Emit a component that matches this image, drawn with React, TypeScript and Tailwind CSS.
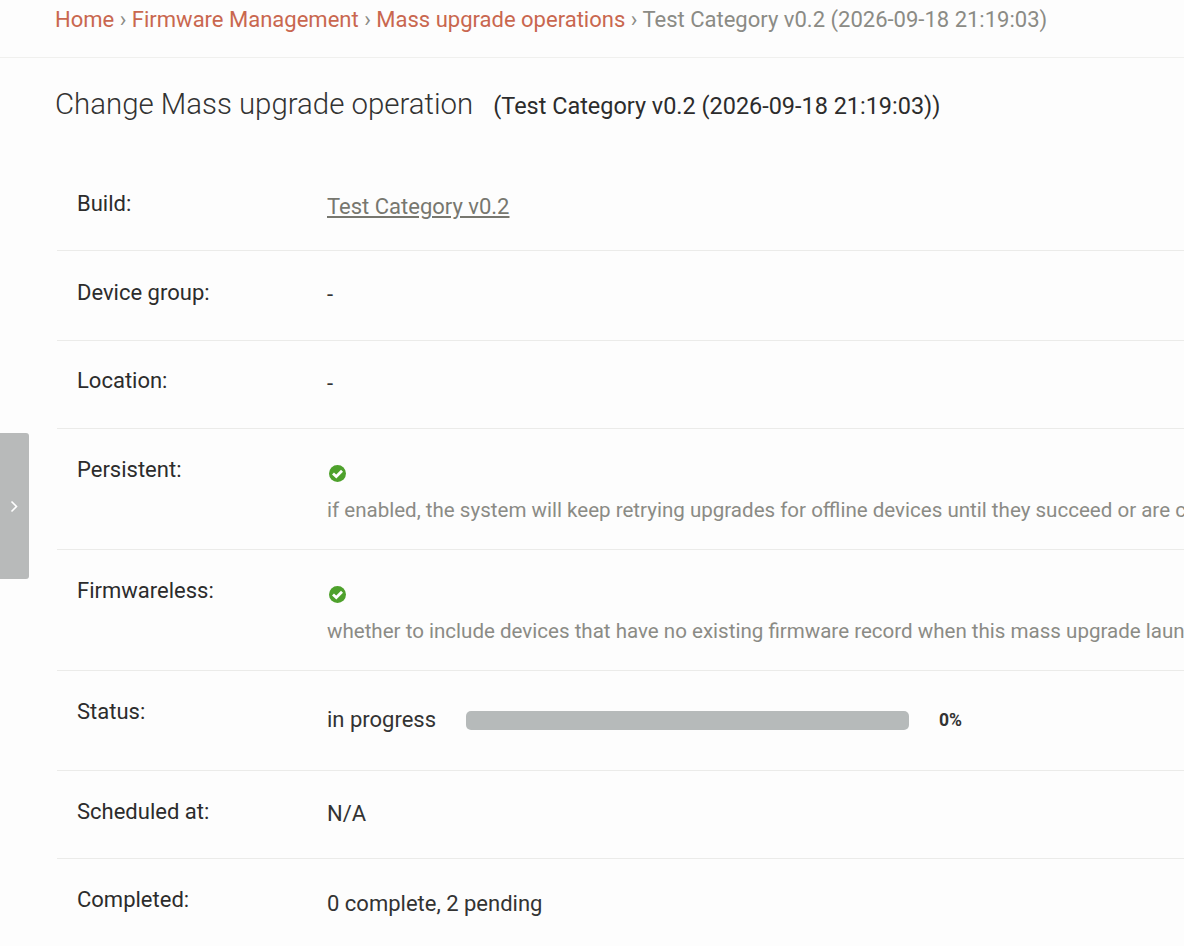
const font = "font-['Roboto',sans-serif]";

function CheckIcon() {
    return (
        <svg width="19" height="19" viewBox="0 0 19 19" className="block">
            <circle cx="9.5" cy="9.5" r="8.5" fill="#4ea12c" />
            <path d="M5 9.5 L8.3 12.6 L14 6.8" fill="none" stroke="#ffffff" strokeWidth="2.8" />
        </svg>
    );
}

function Row({ label, height, labelTop, children }: { label: string; height: string; labelTop: string; children: React.ReactNode }) {
    return (
        <div className={`flex border-b border-[#ebebe9] ${height}`}>
            <div className={`w-[270px] shrink-0 pl-[20px] text-[#2c2c2c] ${labelTop}`}>{label}</div>
            <div className="min-w-0 flex-1 whitespace-nowrap">{children}</div>
        </div>
    );
}

export default function App() {
    return (
        <div className={`${font} relative h-[946px] w-[1184px] overflow-hidden bg-[#fdfdfd] text-[22px] leading-[28px]`}>
            {/* breadcrumbs */}
            <div className="h-[58px] whitespace-nowrap border-b border-[#f0f0ee] pl-[55px] pt-[6px] text-[22.02px] text-[#8b8b85]">
                <span className="text-[#c9674f]">Home</span> › <span className="text-[#c9674f]">Firmware Management</span> ›{" "}
                <span className="text-[#c9674f]">Mass upgrade operations</span> › Test Category v0.2 (2026-09-18 21:19:03)
            </div>

            {/* sidebar toggle */}
            <div className="absolute left-0 top-[433px] flex h-[146px] w-[29px] items-center justify-center rounded-r-[3px] bg-[#b8baba]">
                <svg width="9" height="13" viewBox="0 0 9 13">
                    <path d="M1.5 1.5 L6.5 6.5 L1.5 11.5" fill="none" stroke="#ffffff" strokeWidth="1.6" />
                </svg>
            </div>

            <div className="flex items-baseline whitespace-nowrap pl-[55px] pt-[28px]">
                <h1 className="text-[29.4px] font-light leading-[36px] text-[#333333]">Change Mass upgrade operation</h1>
                <span className="ml-[20px] text-[23.45px] font-normal text-[#2c2c2c]">(Test Category v0.2 (2026-09-18 21:19:03))</span>
            </div>

            <div className="ml-[57px] mt-[23px]">
                <Row label="Build:" height="h-[106px]" labelTop="pt-[45px]">
                    <div className="pt-[48px] text-[#77776f] underline">Test Category v0.2</div>
                </Row>
                <Row label="Device group:" height="h-[90px]" labelTop="pt-[28px]">
                    <div className="pt-[30px] text-[#333333]">-</div>
                </Row>
                <Row label="Location:" height="h-[88px]" labelTop="pt-[26px]">
                    <div className="pt-[29px] text-[#333333]">-</div>
                </Row>
                <Row label="Persistent:" height="h-[121px]" labelTop="pt-[27px]">
                    <div className="pl-px pt-[35px]">
                        <CheckIcon />
                    </div>
                    <div className="pt-[13px] text-[20.55px] text-[#8b8b85]">if enabled, the system will keep retrying upgrades for offline devices until they succeed or are cancelled</div>
                </Row>
                <Row label="Firmwareless:" height="h-[121px]" labelTop="pt-[27px]">
                    <div className="pl-px pt-[35px]">
                        <CheckIcon />
                    </div>
                    <div className="pt-[13px] text-[20.55px] text-[#8b8b85]">whether to include devices that have no existing firmware record when this mass upgrade launches</div>
                </Row>
                <Row label="Status:" height="h-[100px]" labelTop="pt-[27px]">
                    <div className="flex items-center pt-[35px] text-[#333333]">
                        <span>in progress</span>
                        <div className="ml-[30px] h-[19px] w-[443px] rounded-[5px] bg-[#b6baba]" />
                        <span className="ml-[30px] text-[17.5px] font-bold">0%</span>
                    </div>
                </Row>
                <Row label="Scheduled at:" height="h-[88px]" labelTop="pt-[27px]">
                    <div className="pt-[29px] text-[#333333]">N/A</div>
                </Row>
                <div className="flex">
                    <div className="w-[270px] shrink-0 pl-[20px] pt-[27px] text-[#2c2c2c]">Completed:</div>
                    <div className="pt-[31px] text-[#333333]">0 complete, 2 pending</div>
                </div>
            </div>
        </div>
    );
}
